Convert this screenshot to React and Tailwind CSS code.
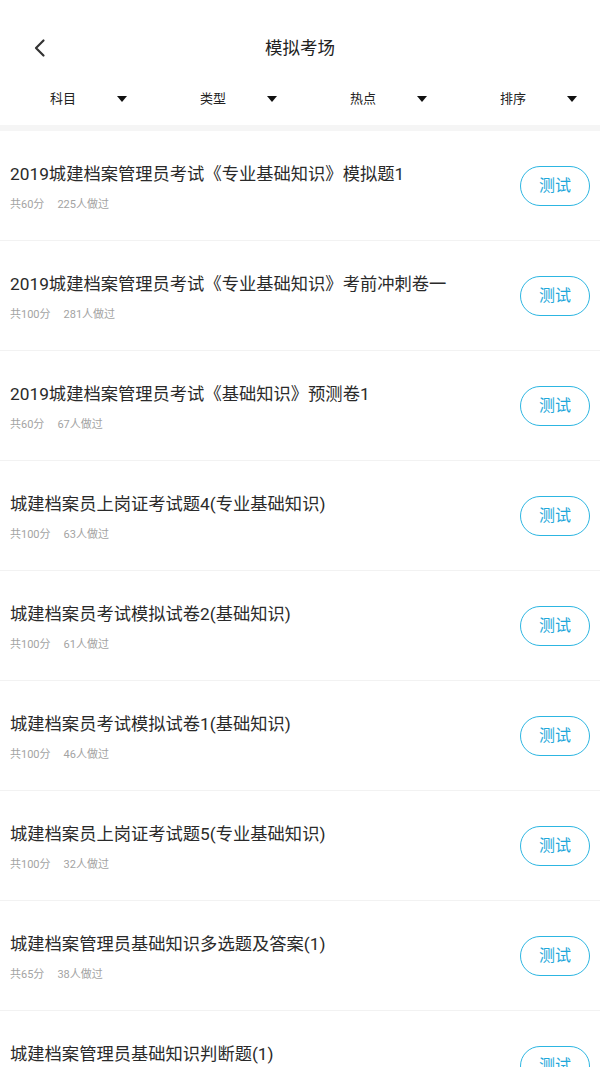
import React from "react";

const items = [
  ["2019城建档案管理员考试《专业基础知识》模拟题1", "共60分", "225人做过"],
  ["2019城建档案管理员考试《专业基础知识》考前冲刺卷一", "共100分", "281人做过"],
  ["2019城建档案管理员考试《基础知识》预测卷1", "共60分", "67人做过"],
  ["城建档案员上岗证考试题4(专业基础知识)", "共100分", "63人做过"],
  ["城建档案员考试模拟试卷2(基础知识)", "共100分", "61人做过"],
  ["城建档案员考试模拟试卷1(基础知识)", "共100分", "46人做过"],
  ["城建档案员上岗证考试题5(专业基础知识)", "共100分", "32人做过"],
  ["城建档案管理员基础知识多选题及答案(1)", "共65分", "38人做过"],
  ["城建档案管理员基础知识判断题(1)", "共100分", "20人做过"],
];

const filters = ["科目", "类型", "热点", "排序"];

export default function App() {
  return (
    <div
      className="w-[600px] h-[1067px] overflow-hidden bg-white text-[#333]"
      style={{ fontFamily: 'Roboto, "Noto Sans CJK SC", "Noto Sans", sans-serif' }}
    >
      <div className="h-6" />
      <div className="relative h-12 flex items-center justify-center">
        <svg className="absolute left-[32px] top-[14px]" width="16" height="20" viewBox="0 0 16 20">
          <polyline points="11.5,2.5 4,10 11.5,17.5" fill="none" stroke="#333" strokeWidth="2.2" strokeLinecap="round" strokeLinejoin="round" />
        </svg>
        <span className="text-[17.5px] text-[#222]">模拟考场</span>
      </div>
      <div className="h-[53px] grid grid-cols-4">
        {filters.map((f) => (
          <div key={f} className="flex items-center pl-[50px] pr-[23px]">
            <span className="text-[13px] text-[#222]">{f}</span>
            <svg className="ml-auto" width="10" height="6" viewBox="0 0 10 6">
              <polygon points="0,0 10,0 5,6" fill="#111" />
            </svg>
          </div>
        ))}
      </div>
      <div className="h-[6px] bg-[#f5f5f5]" />
      {items.map(([title, score, count], i) => (
        <div key={i} className="h-[110px] border-b border-[#f2f2f2] flex items-center justify-between pl-[10px] pr-[10px]">
          <div className="flex flex-col pt-[3px]">
            <div className="text-[17.3px] leading-[24px] text-[#2a2a2a]">{title}</div>
            <div className="mt-[11px] leading-[16px] text-[11px] text-[#a3a3a3] flex gap-[13px]">
              <span>{score}</span>
              <span>{count}</span>
            </div>
          </div>
          <div className="w-[70px] h-[40px] shrink-0 rounded-full border border-[#2db6e2] text-[#1ea8db] text-[16px] flex items-center justify-center">
            测试
          </div>
        </div>
      ))}
    </div>
  );
}
